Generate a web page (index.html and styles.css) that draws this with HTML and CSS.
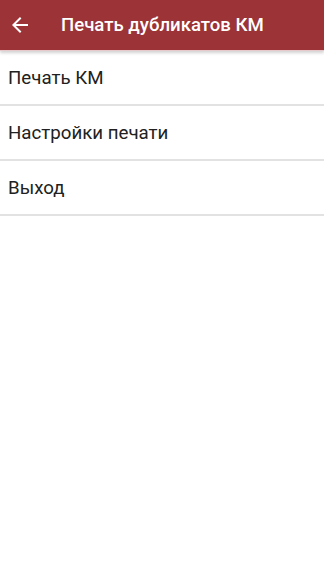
FILE: index.html
```html
<!DOCTYPE html>
<html lang="ru">
<head>
  <meta charset="UTF-8" />
  <meta name="viewport" content="width=device-width, initial-scale=1.0" />
  <title>Печать дубликатов КМ</title>
  <link rel="stylesheet" href="styles.css">
</head>
<body>
  <header class="toolbar">
    <button class="back-btn" aria-label="Назад">
      <svg width="24" height="24" viewBox="0 0 24 24">
        <path d="M20 11H7.83l5.59-5.59L12 4l-8 8 8 8 1.41-1.41L7.83 13H20v-2z" fill="#fff"/>
      </svg>
    </button>
    <h1 class="title">Печать дубликатов КМ</h1>
  </header>
  <ul class="menu">
    <li class="menu-item">Печать КМ</li>
    <li class="menu-item">Настройки печати</li>
    <li class="menu-item">Выход</li>
  </ul>
</body>
</html>
```

FILE: styles.css
```css
body {
  margin: 0;
  background: #fff;
  font-family: Roboto, 'Noto Sans', sans-serif;
  color: #212121;
}
.toolbar {
  height: 51px;
  background: #9b3337;
  display: flex;
  align-items: center;
  box-shadow: 0 2px 3px rgba(0, 0, 0, 0.18);
  border-bottom: 1px solid #e8c9cb;
  box-sizing: border-box;
}
.back-btn {
  background: none;
  border: none;
  padding: 0;
  margin-left: 8px;
  width: 24px;
  height: 24px;
  display: flex;
}
.title {
  margin: 0 0 0 29px;
  font-size: 18.6px;
  font-weight: 500;
  color: #fff;
}
.menu {
  list-style: none;
  margin: 0;
  padding: 0;
}
.menu-item {
  height: 53px;
  display: flex;
  align-items: center;
  padding-left: 8px;
  font-size: 18.7px;
  border-bottom: 2px solid #e2e2e2;
}
```
